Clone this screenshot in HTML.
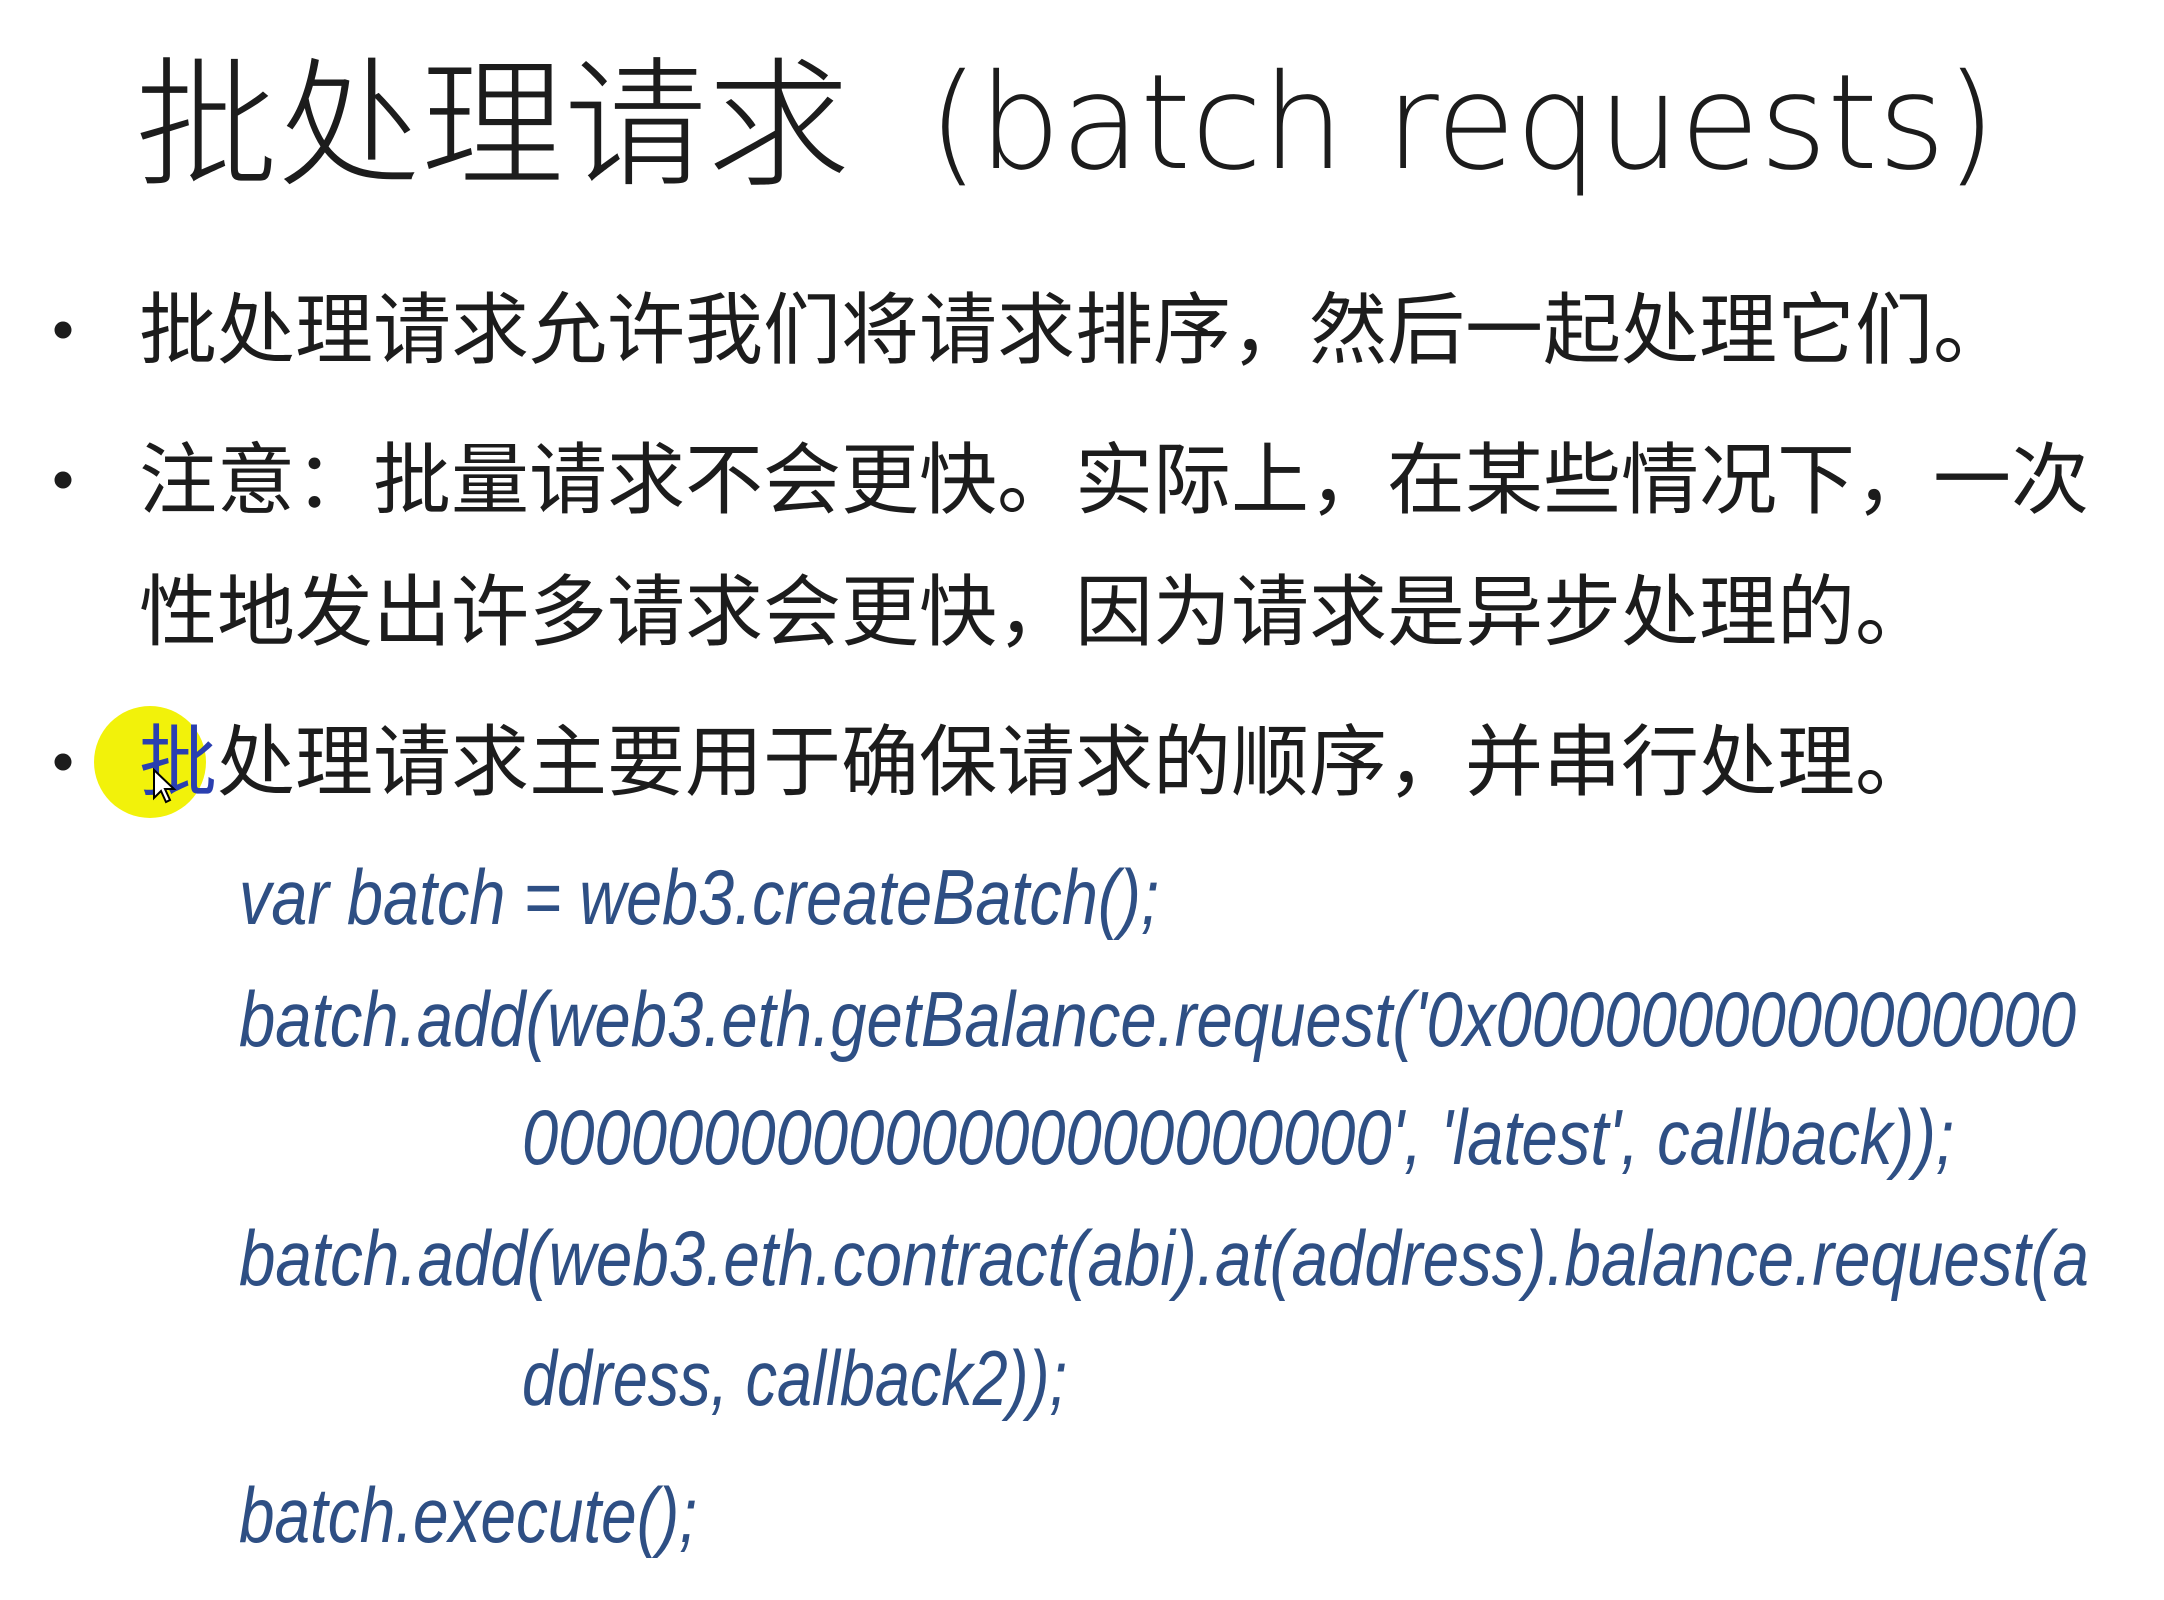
<!DOCTYPE html>
<html><head><meta charset="utf-8"><style>
html,body{margin:0;padding:0;background:#fff;width:2164px;height:1600px;overflow:hidden}
svg{display:block}
.cjk{font-family:"Liberation Sans","Noto Sans CJK SC",sans-serif;fill:#1c1c1c}
.code{font-family:"Liberation Sans",sans-serif;font-style:italic;fill:#2e4f84}
.lat{font-family:"DejaVu Sans","Liberation Sans",sans-serif;font-weight:200;fill:#1c1c1c}
</style></head><body>
<svg width="2164" height="1600" viewBox="0 0 2164 1600" xmlns="http://www.w3.org/2000/svg">
<rect width="2164" height="1600" fill="#fff"/>
<text class="cjk" x="135" y="174" font-size="140" font-weight="300" textLength="715" lengthAdjust="spacingAndGlyphs">批处理请求</text>
<text class="lat" x="928" y="168" font-size="132" textLength="1068" lengthAdjust="spacingAndGlyphs">(batch requests)</text>
<circle cx="150" cy="762" r="56" fill="#f2f20a"/>
<circle cx="63" cy="330" r="8.5" fill="#1c1c1c"/>
<circle cx="63" cy="480" r="8.5" fill="#1c1c1c"/>
<circle cx="63" cy="762" r="8.5" fill="#1c1c1c"/>
<text class="cjk" x="139" y="330" font-size="78" dominant-baseline="central">批处理请求允许我们将请求排序，然后一起处理它们。</text>
<text class="cjk" x="139" y="480" font-size="78" dominant-baseline="central">注意：批量请求不会更快。实际上，在某些情况下，一次</text>
<text class="cjk" x="139" y="612" font-size="78" dominant-baseline="central">性地发出许多请求会更快，因为请求是异步处理的。</text>
<text class="cjk" x="139" y="762" font-size="78" dominant-baseline="central"><tspan fill="#2a3fb0">批</tspan>处理请求主要用于确保请求的顺序，并串行处理。</text>
<path d="M154 770 L154 798 L161 791 L166 802 L170 800 L165 789 L174 789 Z" fill="#fff" stroke="#000" stroke-width="2"/>
<text class="code" x="239" y="924" font-size="78" textLength="920" lengthAdjust="spacingAndGlyphs">var batch = web3.createBatch();</text>
<text class="code" x="239" y="1046" font-size="78" textLength="1837" lengthAdjust="spacingAndGlyphs">batch.add(web3.eth.getBalance.request('0x0000000000000000</text>
<text class="code" x="522" y="1164" font-size="78" textLength="1432" lengthAdjust="spacingAndGlyphs">000000000000000000000000', 'latest', callback));</text>
<text class="code" x="239" y="1285" font-size="78" textLength="1850" lengthAdjust="spacingAndGlyphs">batch.add(web3.eth.contract(abi).at(address).balance.request(a</text>
<text class="code" x="522" y="1405" font-size="78" textLength="545" lengthAdjust="spacingAndGlyphs">ddress, callback2));</text>
<text class="code" x="239" y="1542" font-size="78" textLength="458" lengthAdjust="spacingAndGlyphs">batch.execute();</text>
</svg>
</body></html>
